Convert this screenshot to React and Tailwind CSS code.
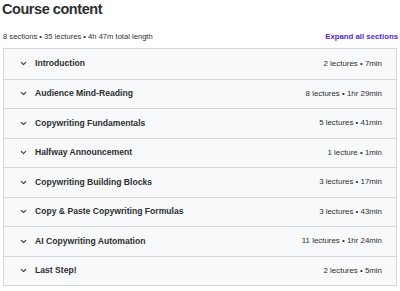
import React from 'react';

const sections = [
  { title: 'Introduction', meta: '2 lectures • 7min' },
  { title: 'Audience Mind-Reading', meta: '8 lectures • 1hr 29min' },
  { title: 'Copywriting Fundamentals', meta: '5 lectures • 41min' },
  { title: 'Halfway Announcement', meta: '1 lecture • 1min' },
  { title: 'Copywriting Building Blocks', meta: '3 lectures • 17min' },
  { title: 'Copy & Paste Copywriting Formulas', meta: '3 lectures • 43min' },
  { title: 'AI Copywriting Automation', meta: '11 lectures • 1hr 24min' },
  { title: 'Last Step!', meta: '2 lectures • 5min' },
];

function Chevron() {
  return (
    <svg width="7" height="5" viewBox="0 0 7 5" className="shrink-0">
      <path d="M1 1.2 L3.5 3.6 L6 1.2" fill="none" stroke="#2d2f31" strokeWidth="1.1" />
    </svg>
  );
}

export default function App() {
  return (
    <div className="w-[400px] h-[291px] bg-white px-[3px] overflow-hidden text-[#2d2f31] font-['Liberation_Sans',Arial,sans-serif]">
      {/* Header */}
      <h2 className="text-[14.5px] leading-[18px] font-bold tracking-[-0.45px] -ml-px">Course content</h2>

      <div className="flex items-end justify-between mt-[12px] h-[12px]">
        <span className="text-[7.6px] leading-[10px] text-[#2d2f31]">8 sections • 35 lectures • 4h 47m total length</span>
        <button className="text-[7.8px] leading-[10px] font-bold text-[#5624d0] -mr-px">Expand all sections</button>
      </div>

      {/* Section list */}
      <div className="mt-[6px] border border-[#d1d7dc]">
        {sections.map((s, i) => (
          <div
            key={s.title}
            className={`flex items-center h-[29.5px] bg-[#f7f9fa] pl-[16px] pr-[14px] ${
              i > 0 ? 'border-t border-[#d1d7dc]' : ''
            }`}
          >
            <Chevron />
            <span className="ml-[8px] text-[8.6px] font-bold">{s.title}</span>
            <span className="ml-auto text-[7.9px]">{s.meta}</span>
          </div>
        ))}
      </div>
    </div>
  );
}
